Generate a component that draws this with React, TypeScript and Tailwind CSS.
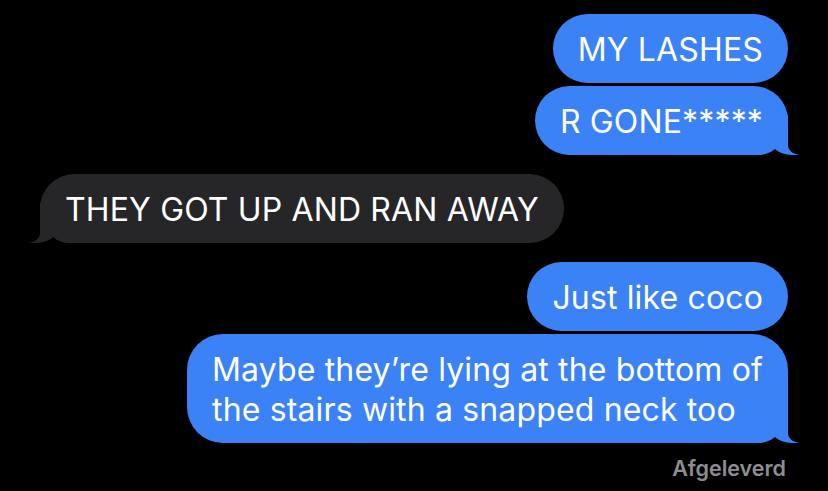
import type { ReactNode } from 'react'

const FONT = { fontFamily: 'Inter, "Liberation Sans", Arial, sans-serif' }

function Tail({ side, color }: { side: 'left' | 'right'; color: string }) {
  const pos = side === 'right' ? 'right-[-12px]' : 'left-[-12px] -scale-x-100'
  return (
    <svg
      className={`absolute bottom-0 ${pos}`}
      width="50"
      height="40"
      viewBox="0 0 50 40"
    >
      <path
        d="M38 0 L38 30 C38 35 42 39 50 40 C44 40.6 31 40 25 34 C20 38 15 40 8 40 L0 40 L0 0 Z"
        fill={color}
      />
    </svg>
  )
}

function Bubble({
  children,
  mine,
  tail,
  className = '',
}: {
  children: ReactNode
  mine?: boolean
  tail?: boolean
  className?: string
}) {
  const color = mine ? '#3b82f6' : '#262628'
  return (
    <div className={`flex ${mine ? 'justify-end' : 'justify-start'} ${className}`}>
      <div
        className={`relative rounded-[36px] px-[25px] pt-[16px] pb-[14px] text-[32px] tracking-[0.15px] leading-[39px] text-white ${
          mine ? 'bg-[#3b82f6]' : 'bg-[#262628]'
        }`}
      >
        {tail && <Tail side={mine ? 'right' : 'left'} color={color} />}
        <span className="relative whitespace-nowrap">{children}</span>
      </div>
    </div>
  )
}

export default function App() {
  return (
    <div className="w-[828px] h-[491px] bg-black px-[40px] pt-[14px] overflow-hidden" style={FONT}>
      <Bubble mine>MY LASHES</Bubble>
      <Bubble mine tail className="mt-[3px]">R GONE*****</Bubble>
      <Bubble tail className="mt-[19px]">THEY GOT UP AND RAN AWAY</Bubble>
      <Bubble mine className="mt-[19px]">Just like coco</Bubble>
      <Bubble mine tail className="mt-[3px]">
        <span className="block leading-[40px] -my-[0.5px]">
          Maybe they’re lying at the bottom of
          <br />
          the stairs with a snapped neck too
        </span>
      </Bubble>
      <div className="flex justify-end pr-[2px] mt-[12px]">
        <span className="text-[21.5px] font-semibold leading-[26px] text-[#8d8d92]">Afgeleverd</span>
      </div>
    </div>
  )
}
